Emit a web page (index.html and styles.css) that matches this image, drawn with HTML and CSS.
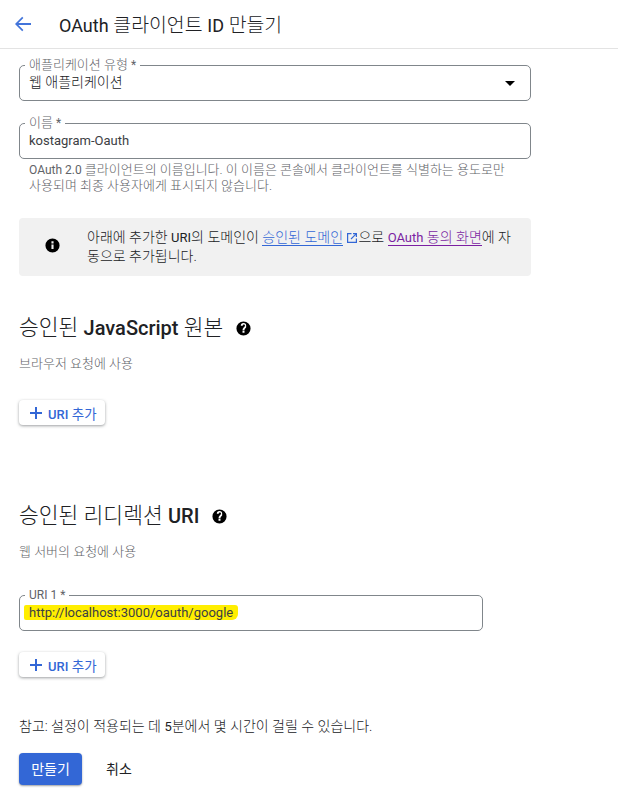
FILE: index.html
```html
<!DOCTYPE html>
<html lang="ko">
  <head>
    <meta charset="UTF-8" />
    <meta name="viewport" content="width=device-width, initial-scale=1.0" />
    <title>OAuth 클라이언트 ID 만들기</title>
    <link rel="stylesheet" href="styles.css">
  </head>

  <body>
    <header class="top-bar">
      <svg class="back-icon" viewBox="0 0 16 16" aria-hidden="true">
        <path d="M16 7.100H3.400l5-5L7.200 .8 0 8l7.200 7.200 1.200-1.300-5-5H16z" />
      </svg>
      <h1><span class="lat">OAuth</span> 클라이언트 <span class="lat">ID</span> 만들기</h1>
    </header>

    <main>
      <div class="field type-field">
        <span class="field-label">애플리케이션 유형 <span class="lat">*</span></span>
        <span class="field-value">웹 애플리케이션</span>
        <span class="select-arrow"></span>
      </div>

      <div class="field name-field">
        <span class="field-label">이름 <span class="lat">*</span></span>
        <span class="field-value lat">kostagram-Oauth</span>
      </div>
      <p class="hint">
        <span class="lat">OAuth 2.0</span> 클라이언트의 이름입니다. 이 이름은 콘솔에서 클라이언트를 식별하는 용도로만<br />
        사용되며 최종 사용자에게 표시되지 않습니다.
      </p>

      <div class="info-box">
        <svg class="info-icon" viewBox="0 0 24 24" aria-hidden="true">
          <path d="M12 2a10 10 0 1 0 0 20 10 10 0 0 0 0-20zm1.500 15h-3v-6.500h3zm0-8h-3V6h3z" />
        </svg>
        <p>
          아래에 추가한 <span class="lat">URI</span>의 도메인이 <a class="link-blue" href="#">승인된 도메인</a>
          <svg class="open-icon" viewBox="0 0 12 12" aria-hidden="true">
            <path d="M1 1h4.500v1.200H2.200v7.600h7.600V6.500H11V11H1zM7 1h4v4H9.800V3L5.400 7.400l-.8-.8L9 2.200H7z" />
          </svg>으로 <a class="link-purple" href="#"><span class="lat">OAuth</span> 동의 화면</a>에 자<br />동으로 추가됩니다.
        </p>
      </div>

      <section class="uri-section js-origins">
        <h2>
          <span>승인된 <b>JavaScript</b> 원본</span>
          <svg class="help-icon" viewBox="0 0 24 24" aria-hidden="true">
            <path d="M12 2a10 10 0 1 0 0 20 10 10 0 0 0 0-20zm1.400 16h-2.800v-2.700h2.800zm2.300-7.300-1 1c-.9.900-1.300 1.500-1.300 2.800h-2.700v-.6c0-1.200.5-2.300 1.300-3.100l1.500-1.500c.4-.4.600-.8.600-1.300 0-.9-.7-1.600-1.600-1.600s-1.600.7-1.600 1.600H8.200a3.800 3.800 0 0 1 7.600 0c0 .8-.1 1.500-.1 2.200z" />
          </svg>
        </h2>
        <p class="section-sub">브라우저 요청에 사용</p>
        <button class="add-btn">
          <svg viewBox="0 0 12 12" aria-hidden="true"><path d="M5 0h2v5h5v2H7v5H5V7H0V5h5z" /></svg>
          <span><b>URI</b> 추가</span>
        </button>
      </section>

      <section class="uri-section redirects">
        <h2>
          <span>승인된 리디렉션 <b>URI</b></span>
          <svg class="help-icon" viewBox="0 0 24 24" aria-hidden="true">
            <path d="M12 2a10 10 0 1 0 0 20 10 10 0 0 0 0-20zm1.400 16h-2.800v-2.700h2.800zm2.300-7.300-1 1c-.9.900-1.300 1.500-1.300 2.800h-2.700v-.6c0-1.200.5-2.300 1.300-3.100l1.500-1.500c.4-.4.600-.8.600-1.300 0-.9-.7-1.600-1.600-1.600s-1.600.7-1.600 1.600H8.200a3.800 3.800 0 0 1 7.600 0c0 .8-.1 1.500-.1 2.200z" />
          </svg>
        </h2>
        <p class="section-sub">웹 서버의 요청에 사용</p>
        <div class="field uri-field">
          <span class="field-label lat">URI 1 *</span>
          <span class="field-value lat"><mark>http://localhost:3000/oauth/google</mark></span>
        </div>
        <button class="add-btn">
          <svg viewBox="0 0 12 12" aria-hidden="true"><path d="M5 0h2v5h5v2H7v5H5V7H0V5h5z" /></svg>
          <span><b>URI</b> 추가</span>
        </button>
      </section>

      <p class="note">참고: 설정이 적용되는 데 <span class="lat">5</span>분에서 몇 시간이 걸릴 수 있습니다.</p>

      <div class="actions">
        <button class="create-btn">만들기</button>
        <button class="cancel-btn">취소</button>
      </div>
    </main>
  </body>
</html>
```

FILE: styles.css
```css
html,
body {
  height: 792px;
  overflow: hidden;
}

body {
  margin: 0;
  font-family: Roboto, "Noto Sans CJK KR", sans-serif;
  font-weight: 300;
  background: #fff;
  color: #202124;
}

/* latin runs are set a bit smaller than the korean around them */
.lat {
  font-weight: 400;
}

.top-bar {
  display: flex;
  align-items: center;
  height: 48px;
  border-bottom: 1px solid #e3e3e3;
}

.back-icon {
  width: 16px;
  height: 16px;
  margin-left: 15px;
  fill: #4274da;
}

.top-bar h1 {
  margin: -2px 0 0 28px;
  font-size: 19.4px;
  font-weight: 300;
}

.top-bar h1 .lat {
  font-size: 18px;
}

main {
  width: 512px;
  padding: 16px 0 0 19px;
}

.field {
  position: relative;
  display: flex;
  align-items: center;
  width: 512px;
  height: 36px;
  padding: 0 9px;
  box-sizing: border-box;
  border: 1px solid #80868b;
  border-radius: 5px;
}

.field-label {
  position: absolute;
  top: -8px;
  left: 5px;
  padding: 0 4px;
  background: #fff;
  font-size: 13px;
  line-height: 14px;
  color: #5f6368;
}

.field-label .lat,
.field-label.lat {
  font-size: 12px;
}

.field-value {
  font-size: 14px;
  line-height: 18px;
  margin-top: -3px;
}

.field-value.lat {
  margin-top: -1px;
  font-size: 13px;
  color: #3c4043;
}

.select-arrow {
  position: absolute;
  right: 15px;
  top: 15px;
  border-left: 5px solid transparent;
  border-right: 5px solid transparent;
  border-top: 5px solid #000;
}

.name-field {
  margin-top: 22px;
}

.hint {
  margin: 3px 0 0 10px;
  font-size: 13px;
  line-height: 15px;
  color: #5f6368;
}

.hint .lat {
  font-size: 12px;
}

.info-box {
  display: flex;
  align-items: center;
  height: 58px;
  margin-top: 25px;
  background: #f1f1f1;
  border-radius: 4px;
}

.info-icon {
  flex: none;
  width: 17px;
  height: 17px;
  margin: -3px 0 0 25px;
  fill: #000;
}

.info-box p {
  margin: -1px 0 0 26px;
  font-size: 14px;
  line-height: 19px;
  white-space: nowrap;
}

.info-box .lat {
  font-size: 13px;
}

.link-blue {
  color: #3367d6;
  text-decoration: none;
  border-bottom: 1px solid #3367d6;
}

.link-purple {
  color: #7b1fa2;
  text-decoration: none;
  border-bottom: 1px solid #7b1fa2;
}

.open-icon {
  width: 12px;
  height: 12px;
  vertical-align: -2px;
  fill: #3367d6;
}

.uri-section h2 {
  display: flex;
  align-items: center;
  margin: 0;
  font-size: 21.5px;
  line-height: 26px;
  font-weight: 300;
}

.uri-section h2 b {
  font-size: 20px;
  font-weight: 500;
}

.help-icon {
  width: 17px;
  height: 17px;
  margin-left: 12px;
  fill: #000;
}

.js-origins {
  margin-top: 39px;
}

.redirects {
  margin-top: 78px;
}

.section-sub {
  margin: 14px 0 0;
  font-size: 13px;
  line-height: 18px;
  color: #5f6368;
}

.add-btn {
  display: flex;
  align-items: center;
  gap: 6px;
  height: 25px;
  margin-top: 27px;
  padding: 0 8px 0 11px;
  border: none;
  border-radius: 4px;
  background: #fff;
  color: #3367d6;
  font-family: inherit;
  font-size: 13.5px;
  box-shadow: 0 1px 3px rgba(60, 64, 67, 0.5);
}

.add-btn svg {
  width: 12px;
  height: 12px;
  fill: #3367d6;
}

.add-btn b {
  font-size: 13px;
  font-weight: 500;
}

.uri-field {
  width: 464px;
  margin-top: 34px;
}

.uri-field .field-value {
  margin-top: 0;
}

.uri-field mark {
  display: inline-block;
  padding: 0 5px;
  margin-left: -5px;
  line-height: 15px;
  background: #ffee00;
  border-radius: 2px 3px 6px 2px;
  color: #3c4043;
}

.uri-field + .add-btn {
  margin-top: 21px;
}

.note {
  margin: 40px 0 0;
  font-size: 14px;
  line-height: 18px;
}

.note .lat {
  font-size: 13px;
}

.actions {
  display: flex;
  align-items: center;
  margin-top: 17px;
}

.create-btn {
  width: 63px;
  height: 32px;
  padding: 0 0 3px;
  border: none;
  border-radius: 4px;
  background: #3367d6;
  color: #fff;
  font-family: inherit;
  font-size: 14px;
  font-weight: 400;
  box-shadow: 0 1px 2px rgba(60, 64, 67, 0.5);
}

.cancel-btn {
  margin: -3px 0 0 24px;
  padding: 0;
  border: none;
  background: none;
  color: #202124;
  font-family: inherit;
  font-size: 14px;
}
```
